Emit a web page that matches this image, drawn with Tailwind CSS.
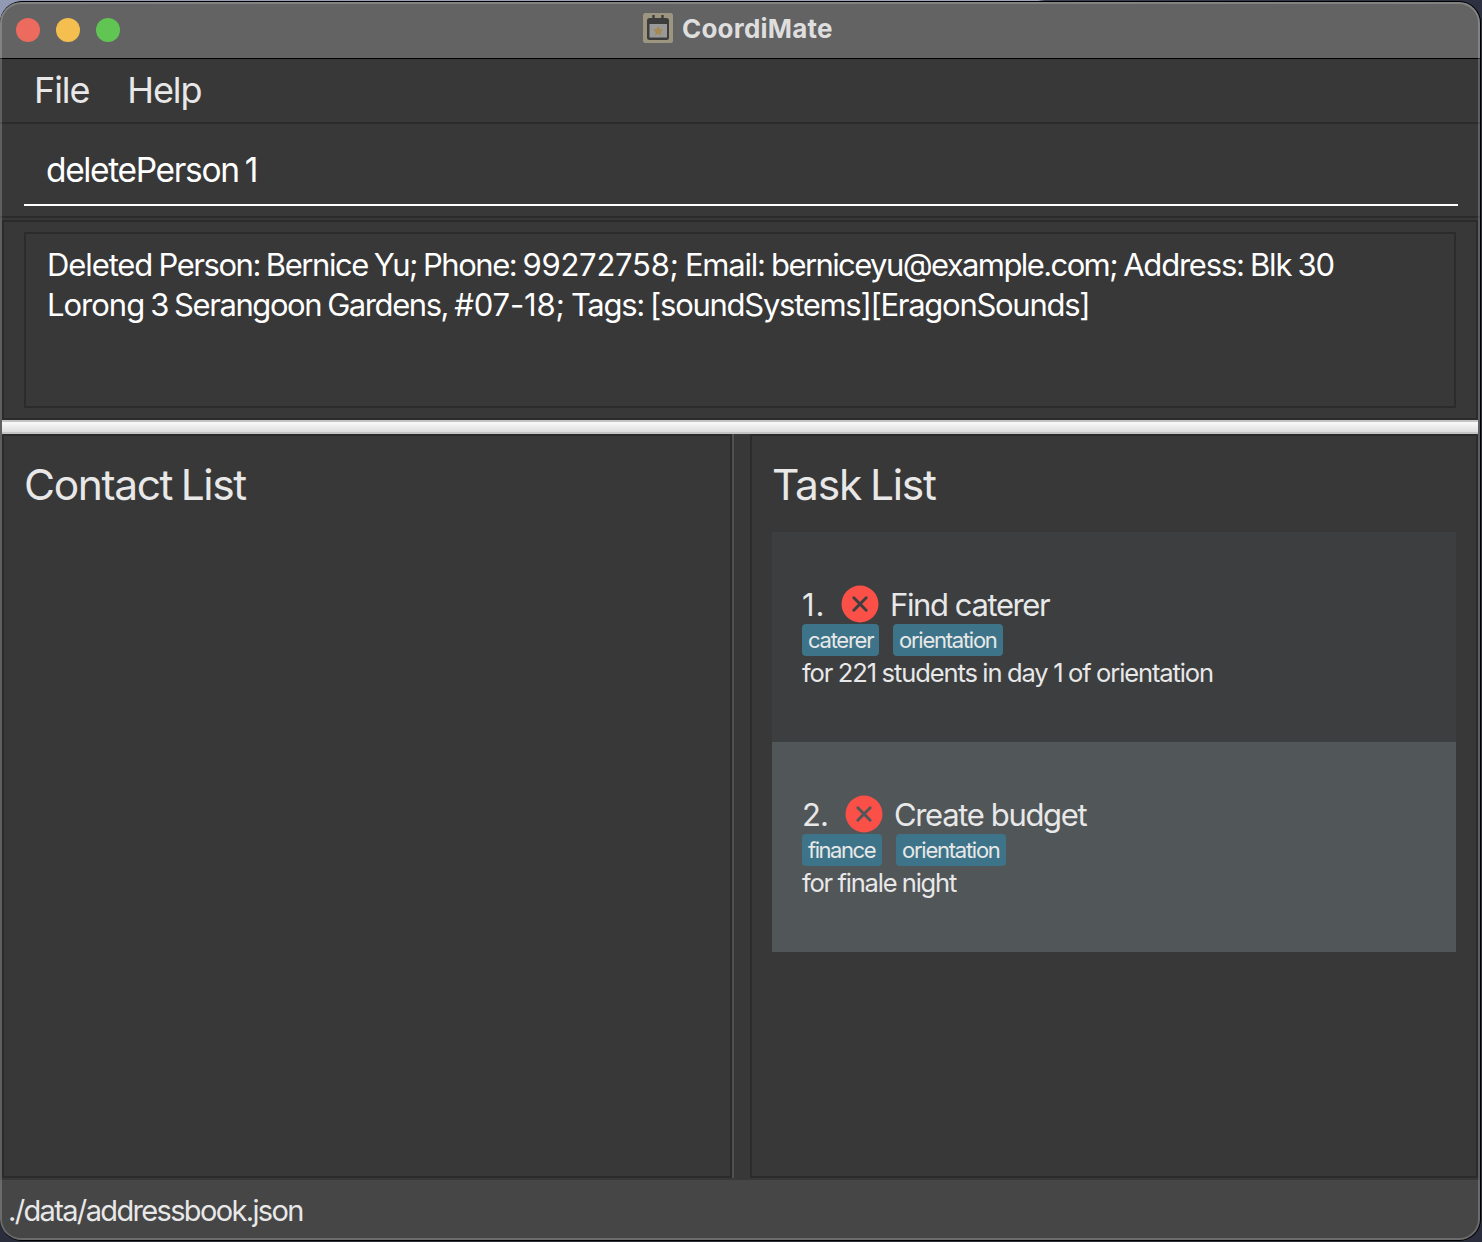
<!DOCTYPE html>
<html lang="en">
<head>
<meta charset="utf-8">
<title>CoordiMate</title>
<script src="https://cdn.jsdelivr.net/npm/@tailwindcss/browser@4"></script>
</head>
<body class="h-[1242px] w-[1482px] overflow-hidden bg-[#2a2d3c] bg-[linear-gradient(90deg,#9299b5_0%,#9ca5bb_70%,#3a3f52_70.500%,#2c3040_100%)] bg-[length:100%_40px] bg-no-repeat font-['Inter',sans-serif] text-[#e8e8e8]">
<div class="relative mt-px flex h-[1240px] w-[1481px] flex-col overflow-hidden rounded-[22px] border-y border-r border-black bg-[#383838] whitespace-nowrap">

  <header class="flex h-[57px] shrink-0 items-center border-b border-black bg-[#636363]">
    <div class="flex w-[643px] gap-4 pl-4">
      <span class="size-6 rounded-full bg-[#ed6a5e]"></span>
      <span class="size-6 rounded-full bg-[#f5bf4f]"></span>
      <span class="size-6 rounded-full bg-[#61c554]"></span>
    </div>
    <svg class="mb-1 size-[30px]" viewBox="0 0 30 30">
      <rect width="30" height="30" rx="2.500" fill="#9c9680"/>
      <path d="M10.500 2v4M19.500 2v4" stroke="#3d3d3d" stroke-width="2.400"/>
      <rect x="4" y="5" width="22" height="22" rx="2.500" fill="#3d3d3d"/>
      <rect x="6.500" y="11" width="17.500" height="13.500" fill="#999"/>
      <path transform="translate(15.200 17.700)" d="M0-5l1.500 3.200 3.500.5-2.500 2.500.6 3.500L0 3l-3.100 1.700.6-3.500L-5-1.300l3.500-.5z" fill="#a5894f"/>
    </svg>
    <h1 class="mb-0.5 ml-[9px] text-[26px] leading-8 font-bold tracking-[0.2px] text-[#dedede]">CoordiMate</h1>
  </header>

  <nav class="flex h-[65px] shrink-0 gap-[38px] border-b-2 border-[#2b2b2b] pl-[34px] text-[36px] leading-[63px]">
    <span class="tracking-[-1.100px]">File</span>
    <span class="tracking-[-1.100px]">Help</span>
  </nav>

  <div class="flex h-[94px] shrink-0 flex-col border-b-2 border-[#2b2b2b] px-6">
    <div class="mr-[-2px] h-[82px] border-b-2 border-white pt-[14px] pl-[22px] text-[33.500px] leading-[64px] tracking-[-1.350px] text-white [word-spacing:-2px]">deletePerson 1</div>
  </div>

  <section class="mx-0.5 mt-0.5 h-[200px] shrink-0 border-2 border-[#2b2b2b] px-5 pt-2.5">
    <div class="h-[176px] border-2 border-[#2b2b2b] pt-[11px] pl-[21px] text-[31px] leading-10 text-white [word-spacing:-1.300px]">
      <p class="tracking-[-1.200px]"><span class="tracking-[-1.100px]">Deleted</span> <span class="tracking-[-1.450px]">Person: Bernice Yu; Phone:</span> <span class="tracking-[-0.250px]">99272758;</span> Email: <span class="tracking-[-1.600px]">berniceyu@example.com;</span> Address: Blk 30</p>
      <p class="tracking-[-1.280px]"><span class="tracking-[-1px]">Lorong</span> <span class="tracking-[-1.420px]">3 Serangoon Gardens,</span> <span class="tracking-[-0.150px]">#07-18;</span> Tags: [soundSystems][EragonSounds]</p>
    </div>
  </section>

  <div class="mx-0.5 h-[14px] shrink-0 border-y-2 border-[#c4c4c4] bg-linear-to-b from-[#fafafa] to-[#dedede]"></div>

  <main class="mx-0.5 flex h-[744px] shrink-0">
    <section class="w-[730px] border-2 border-[#2b2b2b] pt-[18px] pl-5">
      <h2 class="text-[42.500px] leading-[62px] tracking-[-1.380px] [word-spacing:-2px]">Contact List</h2>
    </section>
    <div class="w-[18px] border-l-2 border-[#505050]"></div>
    <section class="flex-1 border-2 border-[#2b2b2b] pt-[18px] pr-5 pl-5">
      <h2 class="text-[42.500px] leading-[62px] tracking-[-1.200px] [word-spacing:-2px]">Task List</h2>
      <ul class="mt-4">
        <li class="flex h-[210px] flex-col bg-[#3c3e3f] pt-[53px] pl-[30px]">
          <div class="flex h-[39px] items-center text-[31px] tracking-[-1.400px]">
            <span class="w-[39px] pt-0.5 tracking-[1px]">1.</span>
            <svg class="mb-0.5 size-[38px]" viewBox="0 0 38 38"><circle cx="19" cy="19" r="18.500" fill="#fa5048"/><path d="M12.800 12.800l12.400 12.400M25.200 12.800l-12.400 12.400" stroke="#3c3e3f" stroke-width="2.900" stroke-linecap="round"/></svg>
            <span class="ml-[11px] pt-0.5">Find caterer</span>
          </div>
          <div class="flex h-8 gap-[14px] text-[22px] leading-8 tracking-[-1.250px]">
            <span class="w-[77px] rounded bg-[#3e7489] pl-1.5">caterer</span>
            <span class="w-[110px] rounded bg-[#3e7489] pl-1.5">orientation</span>
          </div>
          <p class="text-[25.500px] leading-[34px] tracking-[-1.100px] [word-spacing:-0.500px]">for 221 students in day 1 of orientation</p>
        </li>
        <li class="flex h-[210px] flex-col bg-[#515658] pt-[53px] pl-[30px]">
          <div class="flex h-[39px] items-center text-[31px] tracking-[-1.350px]">
            <span class="w-[43px] pt-0.5 tracking-[-0.800px]">2.</span>
            <svg class="mb-0.5 size-[38px]" viewBox="0 0 38 38"><circle cx="19" cy="19" r="18.500" fill="#fa5048"/><path d="M12.800 12.800l12.400 12.400M25.200 12.800l-12.400 12.400" stroke="#515658" stroke-width="2.900" stroke-linecap="round"/></svg>
            <span class="ml-[11px] pt-0.5">Create budget</span>
          </div>
          <div class="flex h-8 gap-[14px] text-[22px] leading-8 tracking-[-1.250px]">
            <span class="w-[80px] rounded bg-[#3e7489] pl-1.5 tracking-[-1.450px]">finance</span>
            <span class="w-[110px] rounded bg-[#3e7489] pl-1.5">orientation</span>
          </div>
          <p class="text-[25.500px] leading-[34px] tracking-[-1.200px] [word-spacing:-0.500px]">for finale night</p>
        </li>
      </ul>
    </section>
  </main>

  <footer class="mt-0.5 flex-1 bg-[#464646] pl-2 text-[29px] leading-[62px] tracking-[-1.650px]">./data/addressbook.json</footer>

  <div class="pointer-events-none absolute inset-0 rounded-[21px] border-2 border-white/20"></div>
</div>
</body>
</html>
